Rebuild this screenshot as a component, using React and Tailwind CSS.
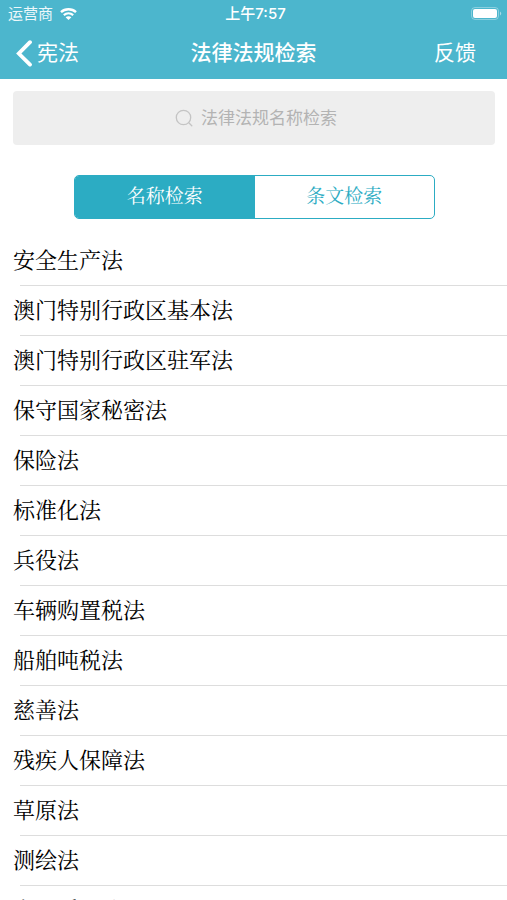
const laws = [
  "安全生产法",
  "澳门特别行政区基本法",
  "澳门特别行政区驻军法",
  "保守国家秘密法",
  "保险法",
  "标准化法",
  "兵役法",
  "车辆购置税法",
  "船舶吨税法",
  "慈善法",
  "残疾人保障法",
  "草原法",
  "测绘法",
  "产品质量法",
];

function StatusBar() {
  return (
    <div className="grid h-7 grid-cols-[1fr_auto_1fr] items-center pr-1 pl-2 font-['Inter','Noto_Sans_CJK_SC',sans-serif] text-[15px] leading-5">
      <div className="flex items-center gap-[7px]">
        <span className="text-white/90">运营商</span>
        <svg className="h-3 w-[17px]" viewBox="0 0 17 12" aria-hidden="true">
          <path d="M1 4.1C5 .3 12 .3 16 4.1" fill="none" stroke="currentColor" strokeWidth="2.4" />
          <path d="M3.8 7.1C6.5 4.8 10.5 4.8 13.2 7.1" fill="none" stroke="currentColor" strokeWidth="2.2" />
          <path d="M5.6 9.2C7.2 7.8 9.8 7.8 11.4 9.2L8.5 12Z" fill="currentColor" />
        </svg>
      </div>
      <span className="text-center font-medium">上午7:57</span>
      <svg className="h-4 w-8 justify-self-end" viewBox="0 0 32 16" aria-hidden="true">
        <rect x=".5" y="1.5" width="27" height="12" rx="3.5" fill="none" stroke="#fff" strokeOpacity=".35" />
        <rect x="2" y="3" width="24" height="9" rx="2" fill="#fff" />
        <path d="M29 5.5Q31.5 7.5 29 9.5Z" fill="#fff" fillOpacity=".5" />
      </svg>
    </div>
  );
}

export default function App() {
  return (
    <div className="flex h-screen flex-col overflow-hidden bg-white font-['Liberation_Sans','Noto_Sans_CJK_SC',sans-serif]">
      <header className="shrink-0 bg-[#4cb6cd] text-white">
        <StatusBar />
        <nav className="grid h-[51px] grid-cols-[1fr_auto_1fr] items-center px-4 pb-0.5 text-[21px] leading-7">
          <button type="button" className="flex items-center gap-[3px] justify-self-start">
            <svg className="h-7 w-[18px]" viewBox="0 0 18 28" fill="none" stroke="currentColor" strokeWidth="3.8" strokeLinecap="round" aria-hidden="true">
              <path d="M14 3.2 2.8 14.5 14 25.6" />
            </svg>
            宪法
          </button>
          <h1 className="text-center font-medium whitespace-nowrap">法律法规检索</h1>
          <button type="button" className="mr-[15px] justify-self-end">反馈</button>
        </nav>
      </header>

      <main className="min-h-0 flex-1 overflow-hidden">
        <label className="mt-3 mr-3 ml-[13px] flex h-[54px] items-center justify-center gap-2 rounded bg-[#eeeeee] pl-2">
          <svg className="size-[18px] text-[#c4c4c4]" viewBox="0 0 18 18" fill="none" stroke="currentColor" strokeWidth="1.3" strokeLinecap="round" aria-hidden="true">
            <circle cx="8.5" cy="8.5" r="7.2" />
            <path d="m14 14 2.8 2.8" />
          </svg>
          <input
            type="text"
            aria-label="法律法规名称检索"
            placeholder="法律法规名称检索"
            className="h-7 w-[140px] bg-transparent pt-0.5 text-[17px] leading-6 text-gray-700 outline-none placeholder:text-[#b3b3b3]"
          />
        </label>

        <div className="mt-[30px] mr-[72px] ml-[74px] grid h-11 grid-cols-2 overflow-hidden rounded-[5px] border border-[#2cacc3] font-['Noto_Serif_CJK_SC','Noto_Sans_CJK_SC',serif] text-[19px] leading-7 text-[#2cacc3]">
          <button type="button" aria-pressed="true" className="bg-[#2cacc3] pb-1 text-white">名称检索</button>
          <button type="button" aria-pressed="false" className="pb-1">条文检索</button>
        </div>

        <ul className="mt-[17px] font-['Noto_Serif_CJK_SC','Noto_Sans_CJK_SC',serif] text-[22px] leading-8 text-black">
          {laws.map((law) => (
            <li key={law}>
              <a href="#" className="flex h-[49px] items-center pb-[3px] pl-[13px]">{law}</a>
              <div className="ml-5 h-px bg-[#dddddd]" />
            </li>
          ))}
        </ul>
      </main>
    </div>
  );
}
